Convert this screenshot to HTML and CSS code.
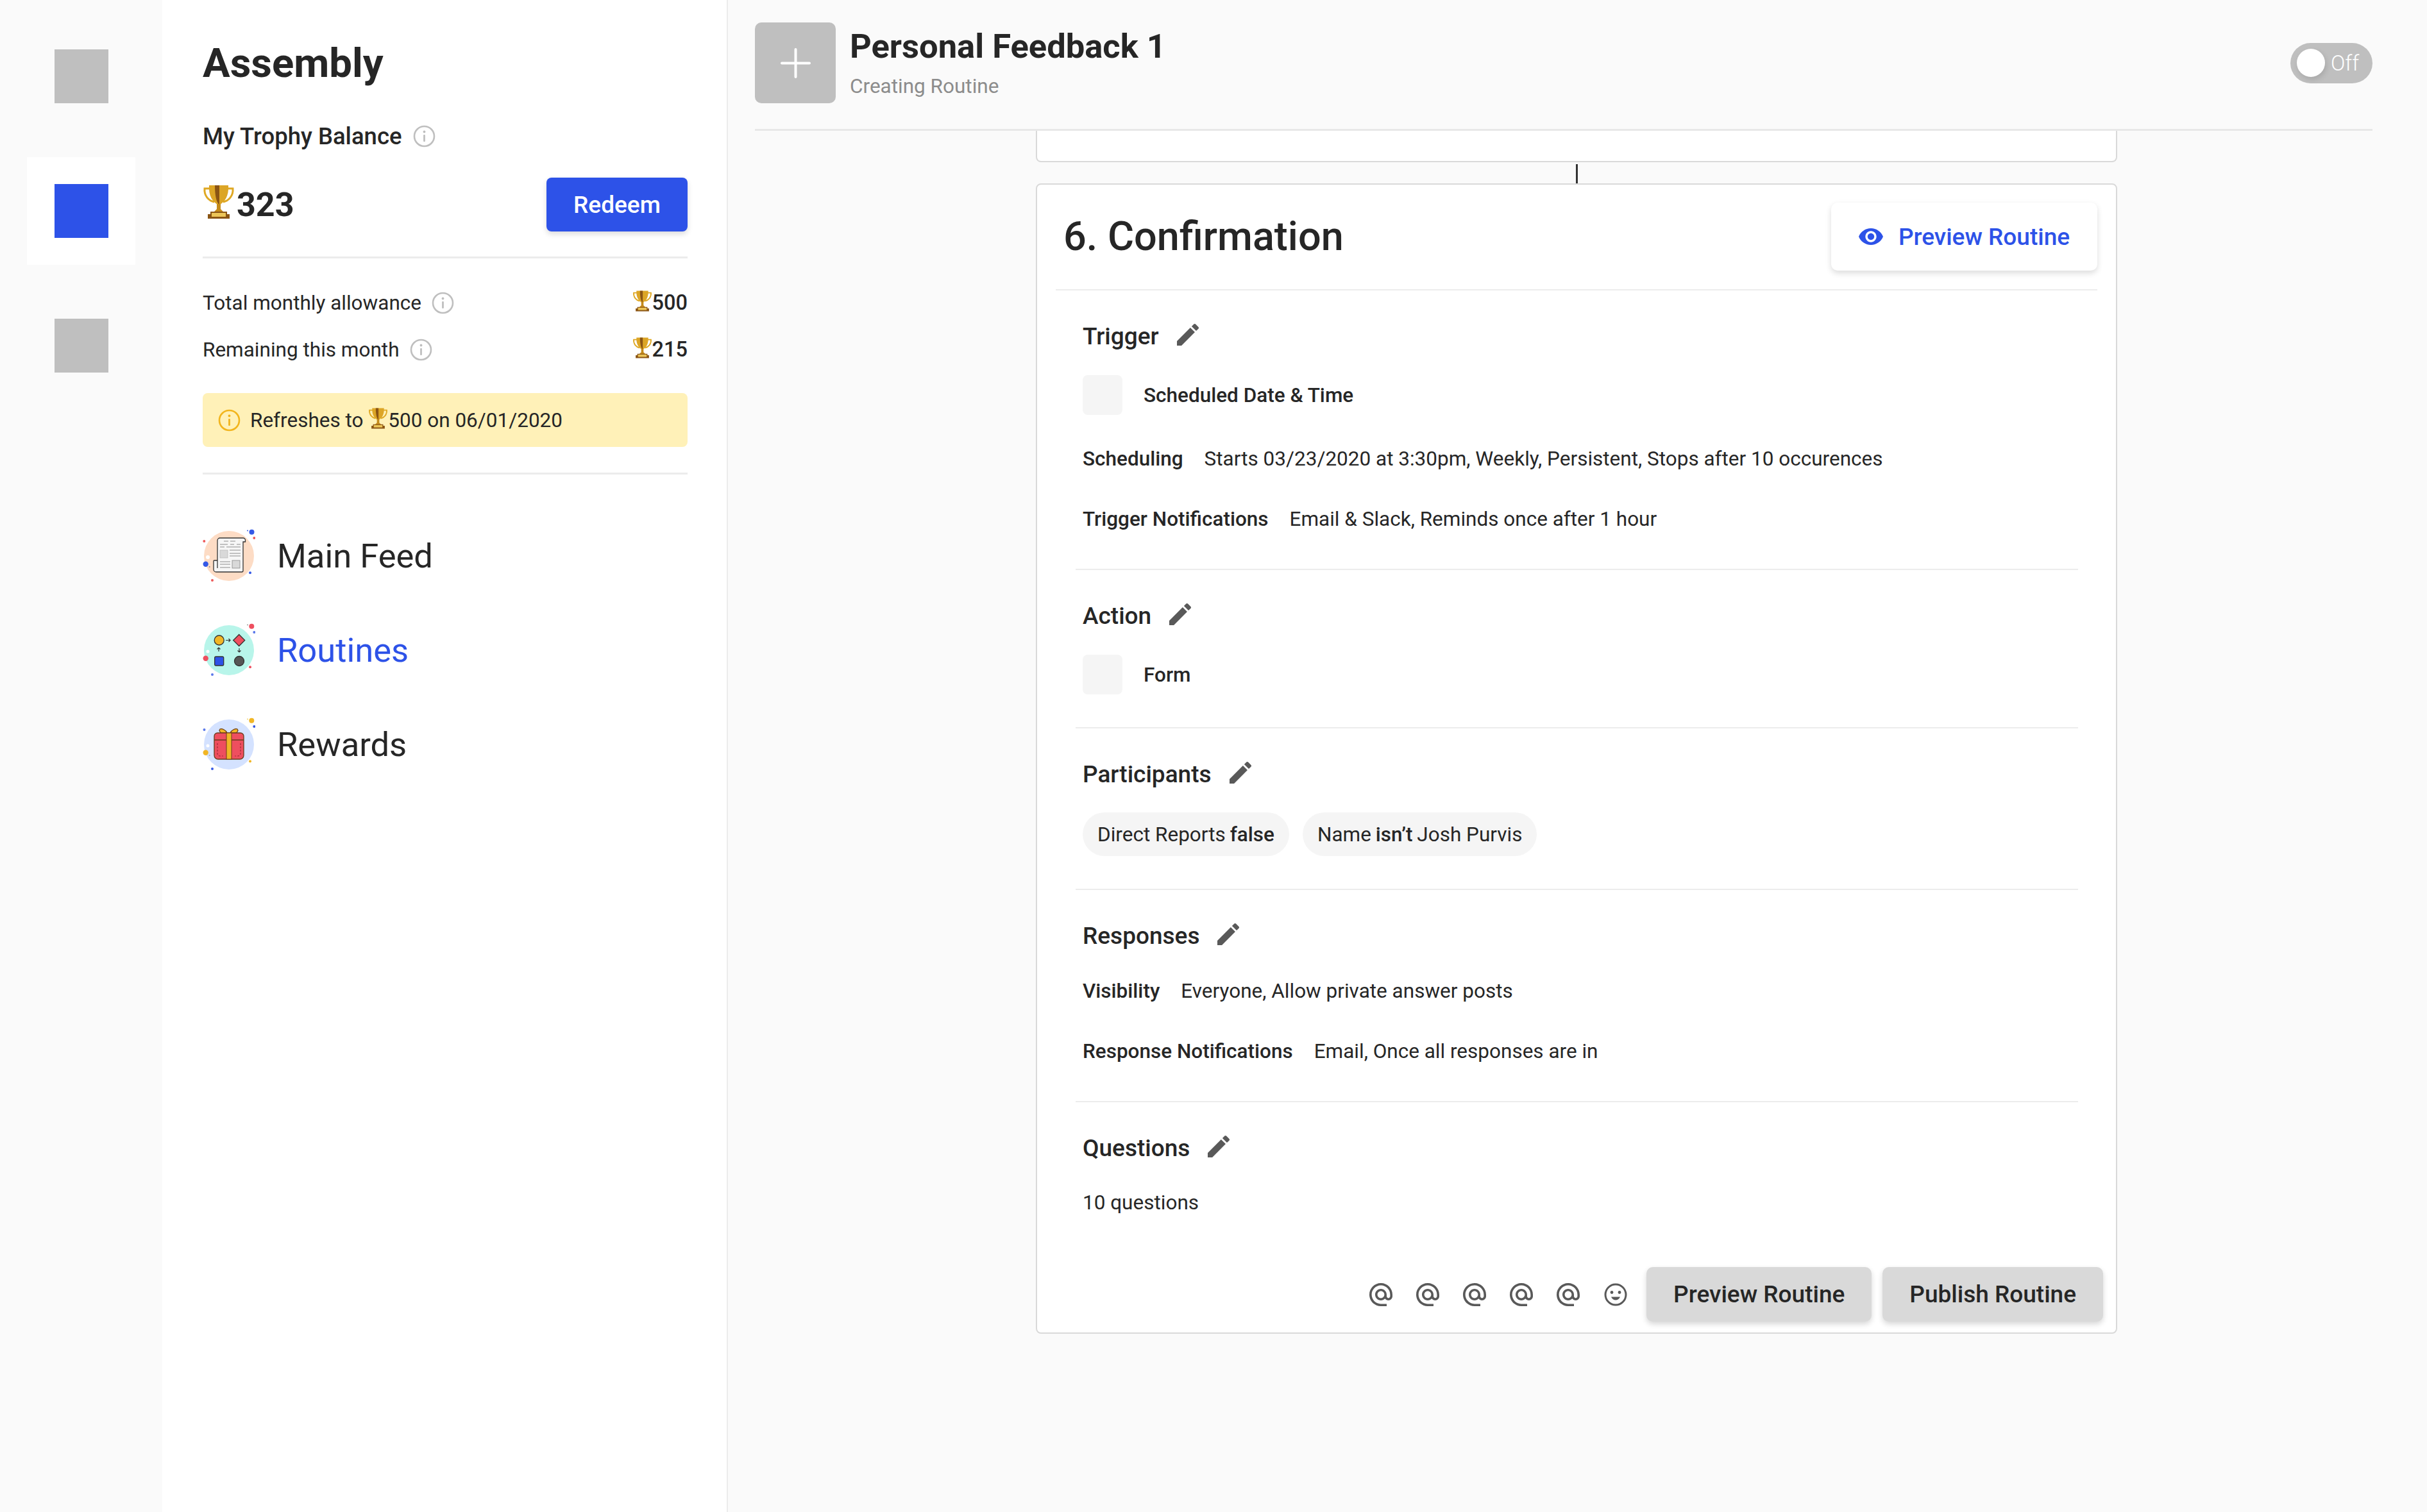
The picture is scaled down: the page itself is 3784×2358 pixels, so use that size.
FILE: index.html
```html
<!DOCTYPE html>
<html lang="en">
<head>
<meta charset="utf-8">
<title>Personal Feedback 1 - Assembly</title>
<link rel="stylesheet" href="styles.css">
</head>
<body>
<svg class="defs" aria-hidden="true">
  <symbol id="trophy" viewBox="0 0 50 54">
    <path d="M13 6H3c-1 11 6 19 15 21" fill="none" stroke="#dfa823" stroke-width="3"/>
    <path d="M37 6h10c1 11-6 19-15 21" fill="none" stroke="#dfa823" stroke-width="3"/>
    <path d="M10 1h30c1 16-5 26-15 31C15 27 9 17 10 1z" fill="#dca526"/>
    <path d="M19 1h7v31C21 27 19 16 19 1z" fill="#8a5414"/>
    <path d="M22 30h6v8l5 5H17l5-5z" fill="#c48a1a"/>
    <path d="M12 42h26v4h4v7H8v-7h4z" fill="#8a5414"/>
    <rect x="14" y="44" width="22" height="6" fill="#ecc558"/>
  </symbol>
  <symbol id="info" viewBox="0 0 35 35">
    <circle cx="17.5" cy="17.5" r="15.5" fill="none" stroke="currentColor" stroke-width="2.6"/>
    <circle cx="17.5" cy="10.5" r="1.9" fill="currentColor"/>
    <rect x="16.1" y="15" width="2.8" height="11" rx="1" fill="currentColor"/>
  </symbol>
  <symbol id="pencil" viewBox="3 3 18 18">
    <path d="M3 17.25V21h3.75L17.81 9.94l-3.75-3.75L3 17.25zM20.71 7.04c.39-.39.39-1.02 0-1.41l-2.34-2.34c-.39-.39-1.02-.39-1.41 0l-1.83 1.83 3.75 3.75 1.83-1.83z" fill="currentColor"/>
  </symbol>
  <symbol id="at" viewBox="2 2 20 20">
    <path d="M12 2C6.48 2 2 6.48 2 12s4.48 10 10 10h5v-2h-5c-4.34 0-8-3.66-8-8s3.66-8 8-8 8 3.66 8 8v1.43c0 .79-.71 1.57-1.5 1.57s-1.5-.78-1.5-1.57V12c0-2.76-2.24-5-5-5s-5 2.24-5 5 2.24 5 5 5c1.38 0 2.64-.56 3.54-1.47.65.89 1.77 1.47 2.96 1.47 1.97 0 3.5-1.6 3.5-3.57V12c0-5.52-4.48-10-10-10zm0 13c-1.66 0-3-1.34-3-3s1.34-3 3-3 3 1.34 3 3-1.34 3-3 3z" fill="currentColor"/>
  </symbol>
  <symbol id="smile" viewBox="0 0 36 36">
    <circle cx="18" cy="18" r="16" fill="none" stroke="currentColor" stroke-width="3"/>
    <circle cx="12" cy="14.5" r="2.4" fill="currentColor"/>
    <circle cx="24" cy="14.5" r="2.4" fill="currentColor"/>
    <path d="M11 21.5c1.5 3.4 4 5 7 5s5.500-1.600 7-5z" fill="currentColor"/>
  </symbol>
</svg>

<div class="app">
  <nav class="rail">
    <div class="rail-tile"><span class="rail-square"></span></div>
    <div class="rail-tile rail-tile-active"><span class="rail-square rail-square-active"></span></div>
    <div class="rail-tile"><span class="rail-square"></span></div>
  </nav>

  <aside class="panel">
    <h1 class="brand">Assembly</h1>
    <div class="balance-label">
      <span>My Trophy Balance</span>
      <svg class="info"><use href="#info"/></svg>
    </div>
    <div class="balance-row">
      <div class="balance">
        <svg class="trophy-lg"><use href="#trophy"/></svg>
        <span>323</span>
      </div>
      <button class="redeem">Redeem</button>
    </div>
    <div class="stat-list">
      <div class="stat">
        <span class="stat-name">Total monthly allowance <svg class="info"><use href="#info"/></svg></span>
        <span class="stat-value"><svg class="trophy-sm"><use href="#trophy"/></svg>500</span>
      </div>
      <div class="stat">
        <span class="stat-name">Remaining this month <svg class="info"><use href="#info"/></svg></span>
        <span class="stat-value"><svg class="trophy-sm"><use href="#trophy"/></svg>215</span>
      </div>
    </div>
    <div class="notice">
      <svg class="info info-warn"><use href="#info"/></svg>
      <span class="notice-text">Refreshes to <svg class="trophy-sm"><use href="#trophy"/></svg>500 on 06/01/2020</span>
    </div>
    <ul class="nav">
      <li class="nav-item">
        <svg class="nav-icon" viewBox="0 0 82 83">
          <circle cx="41" cy="42" r="39" fill="#fddcc5"/>
          <circle cx="76.500" cy="4.800" r="4" fill="#3559e6"/><circle cx="70" cy="2.500" r="1" fill="#3559e6"/>
          <circle cx="80.300" cy="14" r="2" fill="#ee5a5a"/><circle cx="2.300" cy="19" r="2" fill="#ee5a5a"/>
          <circle cx="4.700" cy="54.700" r="4.200" fill="#3559e6"/><circle cx="10.700" cy="59" r="1" fill="#8a8a8a"/>
          <circle cx="74" cy="68.300" r="2" fill="#3559e6"/><circle cx="15" cy="80" r="2" fill="#ee5a5a"/>
          <circle cx="8" cy="44" r="3" fill="#fff"/>
          <path d="M23 61V18a4 4 0 0 1 4-4h36a3.500 3.500 0 0 1 3.500 3.500V20H63v45a2 2 0 0 1-2 2H21a4 4 0 0 1-4-4V50a1 1 0 0 1 1-1h5" fill="#f6f6f6" stroke="#333" stroke-width="1.300"/>
          <path d="M33 19h7M43 19h8M27 24h12M43 24h6M53 24h6M27 28h7M37 28h22M42 33h17M42 38h17M42 42h17M27 51h16M27 55h16M27 60h16" stroke="#8c8c8c" stroke-width="1.200" fill="none"/>
          <rect x="27" y="33" width="12" height="12" fill="#d9d9d9" stroke="#bbb" stroke-width=".8"/>
          <rect x="46" y="49" width="12" height="12" fill="#d9d9d9" stroke="#888" stroke-width=".8"/>
        </svg>
        <span>Main Feed</span>
      </li>
      <li class="nav-item nav-item-active">
        <svg class="nav-icon" viewBox="0 0 82 83">
          <circle cx="41" cy="42" r="39" fill="#b8f5ea"/>
          <circle cx="76.300" cy="4.800" r="4" fill="#ee4f5f"/><circle cx="70" cy="2.500" r="1" fill="#9a9a9a"/>
          <circle cx="80.300" cy="14" r="2" fill="#5a78ea"/><circle cx="4.700" cy="54.700" r="4.200" fill="#ee4f5f"/>
          <circle cx="74" cy="68.300" r="2" fill="#ee4f5f"/><circle cx="15" cy="80" r="2" fill="#5a78ea"/>
          <circle cx="8" cy="44" r="2.500" fill="#fff"/>
          <circle cx="25.700" cy="26.500" r="7.500" fill="#f1b625" stroke="#333" stroke-width="1.300"/>
          <path d="M56.700 17.500l9 9-9 9-9-9z" fill="#ee4f5f" stroke="#333" stroke-width="1.300"/>
          <rect x="18.700" y="52" width="14" height="14" rx="2" fill="#2d52e8" stroke="#333" stroke-width="1.300"/>
          <circle cx="57" cy="59" r="7.500" fill="#555" stroke="#333" stroke-width="1.300"/>
          <path d="M36 26.500h7M40.500 24l2.500 2.500-2.500 2.500M25 44v-6M22.500 40.500L25 38l2.500 2.500M57 39v6M54.500 42.500L57 45l2.500-2.500" fill="none" stroke="#333" stroke-width="1.200"/>
        </svg>
        <span>Routines</span>
      </li>
      <li class="nav-item">
        <svg class="nav-icon" viewBox="0 0 82 83">
          <circle cx="41" cy="42" r="39" fill="#d4e2ff"/>
          <circle cx="76.300" cy="4.800" r="4" fill="#f1b625"/><circle cx="70" cy="2.500" r="1" fill="#f1d36a"/>
          <circle cx="80.300" cy="14" r="2" fill="#3559e6"/><circle cx="2.500" cy="19" r="2" fill="#5a78ea"/>
          <circle cx="4.700" cy="54.700" r="4.200" fill="#f1b625"/><circle cx="10.700" cy="59" r="1" fill="#aaa"/>
          <circle cx="74" cy="68.300" r="2" fill="#f1b625"/><circle cx="15" cy="80" r="2" fill="#3559e6"/>
          <circle cx="8" cy="44" r="2.500" fill="#fff"/>
          <path d="M38 24c-2-5-8-7-11-6-2 2 0 6 3 6zM43 24c2-5 8-7 11-6 2 2 0 6-3 6z" fill="#f1b625" stroke="#6b3b1a" stroke-width="1.200"/>
          <path d="M18 29a5 5 0 0 1 5-5h36a5 5 0 0 1 5 5v30a6 6 0 0 1-6 6H24a6 6 0 0 1-6-6z" fill="#ee4f5f" stroke="#6b3b1a" stroke-width="1.300"/>
          <path d="M18 35h46" stroke="#6b3b1a" stroke-width="1.300"/>
          <rect x="37" y="24" width="8" height="41" fill="#f1b625" stroke="#6b3b1a" stroke-width="1"/>
          <path d="M23 40v16a4 4 0 0 0 4 4h5M59 40v16a4 4 0 0 1-4 4h-5" fill="none" stroke="#a32c38" stroke-width="1.200" stroke-dasharray="3 2"/>
        </svg>
        <span>Rewards</span>
      </li>
    </ul>
  </aside>

  <main class="main">
    <header class="topbar">
      <button class="add" aria-label="Add icon"><svg class="add-icon" viewBox="0 0 47 47"><path d="M23.500 2v43M2 23.500h43" stroke="#fff" stroke-width="4" stroke-linecap="round"/></svg></button>
      <div class="topbar-text">
        <div class="topbar-title">Personal Feedback 1</div>
        <div class="topbar-sub">Creating Routine</div>
      </div>
      <div class="toggle"><span class="toggle-knob"></span><span>Off</span></div>
    </header>

    <div class="stack">
      <div class="card card-cut"></div>
      <span class="connector"></span>
      <section class="card">
        <div class="card-head">
          <h2 class="card-title">6. Confirmation</h2>
          <button class="btn-preview">
            <svg class="eye" viewBox="1 4.500 22 15"><path d="M12 4.500C7 4.500 2.730 7.610 1 12c1.730 4.390 6 7.500 11 7.500s9.270-3.110 11-7.500c-1.730-4.390-6-7.500-11-7.500zM12 17c-2.760 0-5-2.240-5-5s2.240-5 5-5 5 2.240 5 5-2.240 5-5 5zm0-8c-1.660 0-3 1.340-3 3s1.340 3 3 3 3-1.340 3-3-1.340-3-3-3z" fill="currentColor"/></svg>
            Preview Routine
          </button>
        </div>
        <div class="sections">
          <div class="section sec-trigger">
            <div class="sec-head">Trigger <svg class="pencil"><use href="#pencil"/></svg></div>
            <div class="kind"><span class="kind-box"></span><span>Scheduled Date &amp; Time</span></div>
            <div class="line line-a"><b>Scheduling</b><span>Starts 03/23/2020 at 3:30pm, Weekly, Persistent, Stops after 10 occurences</span></div>
            <div class="line line-b"><b>Trigger Notifications</b><span>Email &amp; Slack, Reminds once after 1 hour</span></div>
          </div>
          <div class="section sec-action">
            <div class="sec-head">Action <svg class="pencil"><use href="#pencil"/></svg></div>
            <div class="kind"><span class="kind-box"></span><span>Form</span></div>
          </div>
          <div class="section sec-part">
            <div class="sec-head">Participants <svg class="pencil"><use href="#pencil"/></svg></div>
            <div class="chips">
              <span class="chip">Direct Reports <b>false</b></span>
              <span class="chip">Name <b>isn’t</b> Josh Purvis</span>
            </div>
          </div>
          <div class="section sec-resp">
            <div class="sec-head">Responses <svg class="pencil"><use href="#pencil"/></svg></div>
            <div class="line line-c"><b>Visibility</b><span>Everyone, Allow private answer posts</span></div>
            <div class="line line-b"><b>Response Notifications</b><span>Email, Once all responses are in</span></div>
          </div>
          <div class="section sec-last">
            <div class="sec-head">Questions <svg class="pencil"><use href="#pencil"/></svg></div>
            <div class="line line-d"><span class="plain">10 questions</span></div>
          </div>
        </div>
        <footer class="card-foot">
          <svg class="tool"><use href="#at"/></svg>
          <svg class="tool"><use href="#at"/></svg>
          <svg class="tool"><use href="#at"/></svg>
          <svg class="tool"><use href="#at"/></svg>
          <svg class="tool"><use href="#at"/></svg>
          <svg class="tool tool-last"><use href="#smile"/></svg>
          <button class="btn-grey btn-first">Preview Routine</button>
          <button class="btn-grey">Publish Routine</button>
        </footer>
      </section>
    </div>
  </main>
</div>
</body>
</html>
```
FILE: styles.css
```css
* { box-sizing: border-box; }
html, body { margin: 0; padding: 0; }
body {
  width: 3784px;
  height: 2358px;
  overflow: hidden;
  font-family: Roboto, "Liberation Sans", sans-serif;
  color: #262626;
  background: #fafafa;
}
button { font-family: inherit; border: 0; cursor: pointer; padding: 0; }
h1, h2, ul { margin: 0; padding: 0; }
b { font-weight: 500; }
.defs { position: absolute; width: 0; height: 0; }

.app { display: flex; width: 3784px; height: 2358px; }

/* Rail */
.rail {
  width: 253px;
  flex: none;
  display: flex;
  flex-direction: column;
  align-items: center;
  gap: 42px;
  padding-top: 35px;
  background: #fafafa;
}
.rail-tile { width: 169px; height: 168px; display: flex; align-items: center; justify-content: center; }
.rail-tile-active { background: #fff; }
.rail-square { width: 84px; height: 84px; background: #bfbfbf; }
.rail-square-active { background: #2d52e8; }

/* Panel */
.panel {
  width: 882px;
  flex: none;
  padding: 59px 61px 0 63px;
  background: #fff;
  border-right: 2px solid #ececec;
}
.brand { font-size: 63.5px; line-height: 80px; font-weight: 700; color: #262626; }
.balance-label {
  margin-top: 53px;
  height: 40px;
  display: flex;
  align-items: center;
  gap: 17px;
  font-size: 36.5px;
  font-weight: 500;
}
.info { width: 35px; height: 35px; color: #bfbfbf; flex: none; }
.info-warn { color: #f2b51d; }
.balance-row {
  margin-top: 45px;
  padding-bottom: 39px;
  display: flex;
  justify-content: space-between;
  align-items: center;
  border-bottom: 3px solid #ececec;
}
.balance { display: flex; align-items: center; gap: 3px; font-size: 52px; font-weight: 700; }
.trophy-lg { width: 50px; height: 54px; margin-top: -8px; }
.redeem {
  width: 220px;
  height: 84px;
  border-radius: 8px;
  background: #2d52e8;
  color: #fff;
  font-size: 37px;
  font-weight: 500;
  box-shadow: 0 4px 8px rgba(0, 0, 0, .14);
}
.stat-list { margin-top: 49px; display: flex; flex-direction: column; gap: 33px; }
.stat {
  height: 40px;
  display: flex;
  align-items: center;
  justify-content: space-between;
  font-size: 31.5px;
}
.stat-name { display: flex; align-items: center; gap: 16px; }
.stat-value { display: flex; align-items: center; font-size: 32.5px; font-weight: 500; }
.trophy-sm { width: 31px; height: 33px; margin-top: -6px; }
.notice {
  margin-top: 48px;
  height: 84px;
  padding-left: 24px;
  display: flex;
  align-items: center;
  gap: 15px;
  background: #fff1b8;
  border-radius: 8px;
  font-size: 31.5px;
}
.notice-text { display: flex; align-items: center; white-space: pre; }
.nav {
  list-style: none;
  margin-top: 40px;
  padding-top: 53px;
  border-top: 3px solid #ececec;
}
.nav-item {
  height: 147px;
  display: flex;
  align-items: center;
  gap: 34px;
  font-size: 52.5px;
}
.nav-item-active { color: #2d52e8; }
.nav-icon { width: 82px; height: 83px; flex: none; }

/* Main */
.main { flex: 1; min-width: 0; }
.topbar {
  margin: 0 85px 0 42px;
  padding: 35px 0 40px;
  display: flex;
  align-items: center;
  border-bottom: 3px solid #e8e8e8;
}
.add {
  width: 126px;
  height: 126px;
  flex: none;
  border-radius: 10px;
  background: #bfbfbf;
  display: flex;
  align-items: center;
  justify-content: center;
}
.add-icon { width: 47px; height: 47px; }
.topbar-text { flex: 1; margin-left: 22px; align-self: flex-start; padding-top: 7px; }
.topbar-title { font-size: 52.5px; line-height: 60px; font-weight: 700; }
.topbar-sub { margin-top: 11px; font-size: 31.5px; line-height: 44px; color: #8c8c8c; }
.toggle {
  width: 128px;
  height: 63px;
  padding: 0 10px;
  display: flex;
  align-items: center;
  gap: 9px;
  border-radius: 32px;
  background: #bfbfbf;
  color: #fff;
  font-size: 33px;
  font-weight: 300;
}
.toggle-knob { width: 44px; height: 44px; border-radius: 50%; background: #fff; box-shadow: 2px 4px 8px rgba(0, 0, 0, .12); }

.stack { width: 1686px; margin-left: 480px; display: flex; flex-direction: column; }
.card { background: #fff; border: 2px solid #d9d9d9; border-radius: 8px; }
.card-cut { height: 49px; border-top: 0; border-radius: 0 0 8px 8px; }
.connector { align-self: center; width: 3px; height: 30px; margin-top: 3px; background: #333; }

.card-head {
  margin: 0 29px;
  padding: 28px 0 29px;
  display: flex;
  justify-content: space-between;
  align-items: center;
  border-bottom: 2px solid #ececec;
}
.card-title { margin-left: 12px; font-size: 63px; line-height: 80px; font-weight: 500; }
.btn-preview {
  width: 415px;
  height: 106px;
  display: flex;
  align-items: center;
  justify-content: center;
  gap: 24px;
  border-radius: 10px;
  background: #fff;
  color: #2d52e8;
  font-size: 37px;
  font-weight: 500;
  box-shadow: 0 4px 10px rgba(0, 0, 0, .14);
}
.eye { width: 38px; height: 26px; }

.sections { padding: 0 59px 0 60px; }
.section { padding: 51px 0 52px 11px; border-bottom: 2px solid #ececec; }
.sec-trigger { padding-bottom: 58px; }
.sec-action { padding-bottom: 51px; }
.sec-part { padding-top: 51px; padding-bottom: 51px; }
.sec-resp { padding-top: 51px; padding-bottom: 58px; }
.sec-last { padding-top: 51px; padding-bottom: 0; border-bottom: 0; }
.sec-head {
  height: 40px;
  display: flex;
  align-items: center;
  gap: 28px;
  font-size: 37px;
  font-weight: 500;
}
.pencil { width: 34px; height: 34px; color: #595959; margin-top: -5px; }
.kind { margin-top: 41px; display: flex; align-items: center; gap: 33px; font-size: 31.5px; font-weight: 500; }
.kind-box { width: 62px; height: 62px; border-radius: 8px; background: #f5f5f5; }
.line { height: 40px; display: flex; align-items: center; gap: 33px; font-size: 31.5px; }
.line-a { margin-top: 48px; }
.line-b { margin-top: 54px; }
.line-c { margin-top: 46px; }
.line-d { margin-top: 45px; }
.chips { margin-top: 40px; display: flex; gap: 21px; }
.chip {
  height: 68px;
  padding: 0 23px;
  display: flex;
  align-items: center;
  gap: .22em;
  border-radius: 34px;
  background: #f5f5f5;
  font-size: 31.5px;
}
.card-foot {
  margin-top: 81px;
  padding: 0 20px 17px 0;
  display: flex;
  align-items: center;
  justify-content: flex-end;
  gap: 37px;
}
.tool { width: 36px; height: 36px; color: #595959; flex: none; }
.tool-last { margin-left: 1px; margin-right: -7px; }
.btn-grey {
  height: 85px;
  padding: 0 42px;
  border-radius: 10px;
  background: #d9d9d9;
  color: #262626;
  font-size: 37px;
  font-weight: 500;
  box-shadow: 0 4px 8px rgba(0, 0, 0, .16);
}
.btn-grey + .btn-grey { margin-left: -20px; }
```
